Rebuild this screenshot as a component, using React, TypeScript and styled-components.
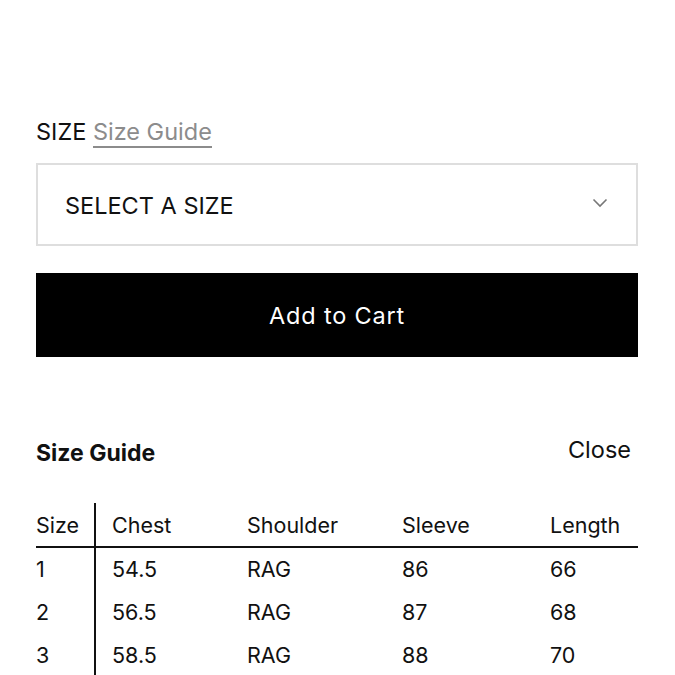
import React from 'react';
import styled, {createGlobalStyle} from "styled-components";

const GlobalStyle = createGlobalStyle`
  * {
    box-sizing: border-box;
  }

  body {
    margin: 0;
    background: #fff;
    color: #111;
    font-family: Inter, "Noto Sans", "Liberation Sans", sans-serif;
  }
`

const rows = [
    ['1', '54.5', 'RAG', '86', '66'],
    ['2', '56.5', 'RAG', '87', '68'],
    ['3', '58.5', 'RAG', '88', '70'],
]

const headers = ['Size', 'Chest', 'Shoulder', 'Sleeve', 'Length']

const App = () => {
    return (
        <Page>
            <GlobalStyle/>
            <SizeLabel>
                SIZE <GuideLink>Size Guide</GuideLink>
            </SizeLabel>
            <Select>
                <span>SELECT A SIZE</span>
                <svg width="16" height="10" viewBox="0 0 16 10" fill="none">
                    <path d="M1.5 1.5 L8 8 L14.5 1.5" stroke="#777" strokeWidth="1.6"/>
                </svg>
            </Select>
            <CartButton>Add to Cart</CartButton>

            <GuideHead>
                <GuideTitle>Size Guide</GuideTitle>
                <CloseLink>Close</CloseLink>
            </GuideHead>

            <Table>
                <colgroup>
                    <col style={{width: 59}}/>
                    <col style={{width: 136}}/>
                    <col style={{width: 155}}/>
                    <col style={{width: 148}}/>
                    <col style={{width: 104}}/>
                </colgroup>
                <thead>
                <HeadRow>
                    {headers.map(h => <th key={h}>{h}</th>)}
                </HeadRow>
                </thead>
                <tbody>
                {rows.map(r => (
                    <BodyRow key={r[0]}>
                        {r.map((c, i) => <td key={i}>{c}</td>)}
                    </BodyRow>
                ))}
                </tbody>
            </Table>
        </Page>
    );
};

export default App;


const Page = styled.div`
  padding: 117px 37px 0 36px;
  width: 675px;
  height: 675px;
  overflow: hidden;
`

const SizeLabel = styled.div`
  font-size: 23.5px;
  line-height: 29px;
  color: #111;
  margin-bottom: 17px;
`

const GuideLink = styled.span`
  color: #8c8c8c;
  border-bottom: 2px solid #8c8c8c;
  padding-bottom: 0;
`

const Select = styled.div`
  display: flex;
  align-items: center;
  justify-content: space-between;
  height: 83px;
  border: 2px solid #dedede;
  padding: 0 28px 0 27px;
  font-size: 23.5px;
  color: #111;
  margin-bottom: 27px;

  & span {
    margin-top: 2px;
  }

  & svg {
    margin-top: -3px;
  }
`

const CartButton = styled.button`
  display: block;
  width: 100%;
  height: 84px;
  background: #000;
  color: #fff;
  border: none;
  font-family: inherit;
  font-size: 23.5px;
  letter-spacing: 0.8px;
  margin-bottom: 78px;
`

const GuideHead = styled.div`
  display: flex;
  justify-content: space-between;
  align-items: flex-start;
  padding-right: 7px;
  margin-bottom: 35px;
`

const GuideTitle = styled.div`
  font-weight: 700;
  font-size: 23px;
  line-height: 29px;
  padding-top: 4px;
`

const CloseLink = styled.div`
  font-size: 23.5px;
  line-height: 29px;
`

const Table = styled.table`
  width: 100%;
  table-layout: fixed;
  border-collapse: collapse;
  font-size: 21.5px;

  & th, & td {
    text-align: left;
    font-weight: 400;
    padding: 0 0 0 16px;
    white-space: nowrap;
  }

  & th:first-child, & td:first-child {
    padding-left: 0;
    border-right: 2px solid #111;
  }
`

const HeadRow = styled.tr`
  height: 44px;
  border-bottom: 2px solid #111;
`

const BodyRow = styled.tr`
  height: 43px;
`
